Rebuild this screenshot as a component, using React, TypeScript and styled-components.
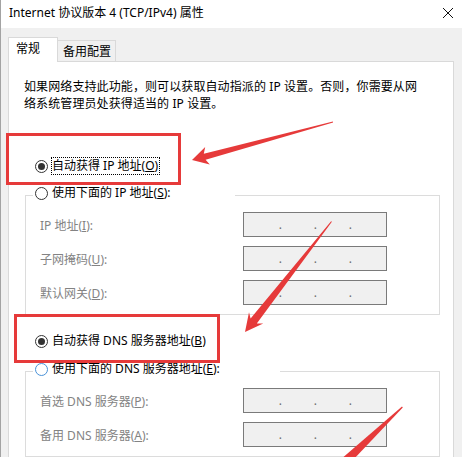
import styled, { createGlobalStyle } from "styled-components";

const GlobalStyle = createGlobalStyle`
  html, body {
    margin: 0;
    padding: 0;
    background: #f0f0f0;
  }
  body {
    font-family: "Noto Sans", "Noto Sans CJK SC", sans-serif;
    font-size: 12px;
    color: #000;
  }
  * {
    box-sizing: border-box;
  }
`;

const Window = styled.div`
  position: relative;
  width: 462px;
  height: 457px;
  overflow: hidden;
  background: #f0f0f0;
  border-left: 1px solid #a3a3a3;
  display: flex;
  flex-direction: column;
`;

const TitleBar = styled.div`
  height: 28px;
  flex-shrink: 0;
  background: #fff;
  display: flex;
  align-items: center;
  padding: 0 8px 0 8px;
`;

const Title = styled.span`
  font-size: 12px;
  line-height: 16px;
  margin-top: -2px;
  white-space: nowrap;
`;

const CloseButton = styled.svg`
  margin-left: auto;
  margin-right: 0;
  margin-top: -3px;
`;

const Body = styled.div`
  flex: 1;
  display: flex;
  flex-direction: column;
  padding: 9px 8px 0 7px;
`;

const TabStrip = styled.div`
  display: flex;
  align-items: flex-end;
  height: 25px;
  margin-bottom: -1px;
  position: relative;
  z-index: 1;
`;

const Tab = styled.div<{ $active?: boolean }>`
  height: ${(p) => (p.$active ? "25px" : "21px")};
  margin-bottom: ${(p) => (p.$active ? "0" : "1px")};
  width: ${(p) => (p.$active ? "50px" : "58px")};
  background: ${(p) => (p.$active ? "#fff" : "#f0f0f0")};
  border: 1px solid #d9d9d9;
  border-bottom: none;
  border-left: ${(p) => (p.$active ? "1px solid #d9d9d9" : "none")};
  padding-left: ${(p) => (p.$active ? "7px" : "5px")};
  padding-top: 2px;
  font-size: 12px;
  line-height: 17px;
  white-space: nowrap;
`;

const Panel = styled.div`
  flex: 1;
  background: #fff;
  border: 1px solid #d9d9d9;
  padding: 16px 13px 0 15px;
`;

const Description = styled.p`
  margin: 0;
  font-size: 12px;
  line-height: 17px;
  letter-spacing: 0.1px;
  white-space: nowrap;
`;

const RadioRow = styled.div<{ $top: number }>`
  display: flex;
  align-items: center;
  height: 20px;
  margin-top: ${(p) => p.$top}px;
  margin-left: 11px;
  gap: 3px;
`;

const Radio = styled.span<{ $checked?: boolean; $hover?: boolean }>`
  width: 13px;
  height: 13px;
  flex-shrink: 0;
  border-radius: 50%;
  border: 1px solid ${(p) => (p.$hover ? "#4a92d8" : "#333")};
  background: #fff;
  display: flex;
  align-items: center;
  justify-content: center;

  &::after {
    content: "";
    display: ${(p) => (p.$checked ? "block" : "none")};
    width: 7px;
    height: 7px;
    border-radius: 50%;
    background: #333;
  }
`;

const RadioText = styled.span<{ $focused?: boolean }>`
  font-size: 12px;
  line-height: 16px;
  white-space: nowrap;
  border: 1px dotted ${(p) => (p.$focused ? "#000" : "transparent")};
  padding: 0 1px 0 0;
`;

const Group = styled.fieldset<{ $top: number }>`
  margin: ${(p) => p.$top}px 0 0 1px;
  padding: 0 0 9px 0;
  border: 1px solid #dcdcdc;
  min-width: 0;
`;

const Legend = styled.legend<{ $width: number }>`
  width: ${(p) => p.$width}px;
  margin-left: 7px;
  padding: 0 0 4px 2px;
  height: 24px;
  display: flex;
  align-items: center;
  gap: 3px;
`;

const FieldList = styled.div`
  display: flex;
  flex-direction: column;
  gap: 9px;
  padding-top: 5px;
`;

const FieldRow = styled.div`
  display: flex;
  align-items: center;
  height: 25px;
  padding-left: 14px;
`;

const FieldLabel = styled.span`
  width: 203px;
  color: #838383;
  font-size: 12px;
  white-space: nowrap;
`;

const IpBox = styled.div`
  width: 144px;
  height: 25px;
  background: #f0f0f0;
  border: 1px solid #7a7a7a;
  display: flex;
  padding-left: 3px;
`;

const Dot = styled.span`
  width: 35px;
  text-align: right;
  color: #6d6d6d;
  font-size: 12px;
  line-height: 23px;
`;

const Overlay = styled.svg`
  position: absolute;
  left: -1px;
  top: 0;
  pointer-events: none;
  z-index: 5;
`;

const RED = "#e63a3a";

function IpField() {
  return (
    <IpBox>
      <Dot>.</Dot>
      <Dot>.</Dot>
      <Dot>.</Dot>
    </IpBox>
  );
}

function Field({ label }: { label: React.ReactNode }) {
  return (
    <FieldRow>
      <FieldLabel>{label}</FieldLabel>
      <IpField />
    </FieldRow>
  );
}

export default function App() {
  return (
    <>
      <GlobalStyle />
      <Window>
        <TitleBar>
          <Title>Internet 协议版本 4 (TCP/IPv4) 属性</Title>
          <CloseButton width="12" height="12" viewBox="0 0 12 12">
            <path d="M1 1 L11 11 M11 1 L1 11" stroke="#111" strokeWidth="1" fill="none" />
          </CloseButton>
        </TitleBar>
        <Body>
          <TabStrip>
            <Tab $active>常规</Tab>
            <Tab>备用配置</Tab>
          </TabStrip>
          <Panel>
            <Description>
              如果网络支持此功能，则可以获取自动指派的 IP 设置。否则，你需要从网
              <br />
              络系统管理员处获得适当的 IP 设置。
            </Description>

            <RadioRow $top={44}>
              <Radio $checked />
              <RadioText $focused>
                自动获得 IP 地址(<u>O</u>)
              </RadioText>
            </RadioRow>

            <Group $top={7}>
              <Legend $width={202}>
                <Radio />
                <RadioText>
                  使用下面的 IP 地址(<u>S</u>):
                </RadioText>
              </Legend>
              <FieldList>
                <Field label={<>IP 地址(<u>I</u>):</>} />
                <Field label={<>子网掩码(<u>U</u>):</>} />
                <Field label={<>默认网关(<u>D</u>):</>} />
              </FieldList>
            </Group>

            <RadioRow $top={16}>
              <Radio $checked />
              <RadioText>
                自动获得 DNS 服务器地址(<u>B</u>)
              </RadioText>
            </RadioRow>

            <Group $top={8}>
              <Legend $width={247}>
                <Radio $hover />
                <RadioText>
                  使用下面的 DNS 服务器地址(<u>E</u>):
                </RadioText>
              </Legend>
              <FieldList>
                <Field label={<>首选 DNS 服务器(<u>P</u>):</>} />
                <Field label={<>备用 DNS 服务器(<u>A</u>):</>} />
              </FieldList>
            </Group>
          </Panel>
        </Body>

        {/* red annotation marks drawn over the dialog */}
        <Overlay width="462" height="457" viewBox="0 0 462 457">
          <rect x="7.5" y="134.5" width="172" height="49" fill="none" stroke={RED} strokeWidth="3" />
          <rect x="15.5" y="315.5" width="203" height="46" fill="none" stroke={RED} strokeWidth="3" />
          <polygon
            fill={RED}
            points="192,160 205.2,147.1 203.8,153.7 332.9,121.4 333.1,122.6 205.6,159.8 209.8,164.5"
          />
          <polygon
            fill={RED}
            points="245,332 249,312.3 250.6,318.6 331.1,221.2 331.9,221.8 256.8,323.6 263.2,323.5"
          />
          <polygon fill={RED} points="402,406.6 402.8,407.4 353,460 340,460" />
        </Overlay>
      </Window>
    </>
  );
}
